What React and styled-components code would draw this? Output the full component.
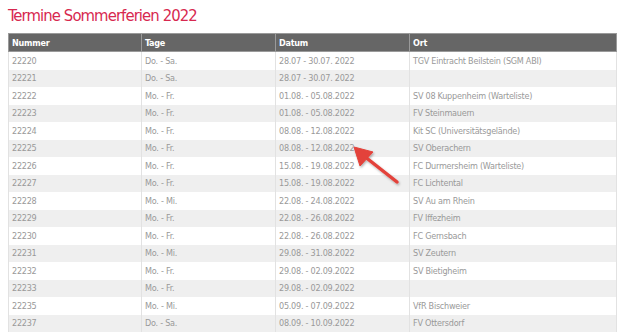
import styled, { createGlobalStyle } from 'styled-components';

const GlobalStyle = createGlobalStyle`
  body {
    margin: 0;
    background: #fff;
    font-family: "DejaVu Sans Condensed", "Liberation Sans Narrow", "Liberation Sans", sans-serif;
  }
`;

const Page = styled.div`
  position: relative;
  padding: 5px 4px 0 8px;
`;

const Title = styled.h2`
  margin: 0 0 7px;
  font-size: 16.5px;
  font-weight: 400;
  letter-spacing: -0.9px;
  line-height: 21px;
  color: #d7284f;
`;

const Table = styled.table`
  width: 608px;
  border-collapse: collapse;
  table-layout: fixed;
  font-size: 9px;
  letter-spacing: -0.25px;
`;

const HeadCell = styled.th`
  height: 17px;
  padding: 0 3px;
  text-align: left;
  font-weight: 700;
  color: #fff;
  background: #666;
  border: 1px solid #9a9a9a;
`;

const Row = styled.tr`
  background: ${p => (p.$striped ? '#efefef' : '#fff')};
`;

const Cell = styled.td`
  height: 17.5px;
  padding: 0 3px;
  color: #999;
  border-left: 1px solid #e2e2e2;
  border-right: 1px solid #e2e2e2;
  white-space: nowrap;
`;

const Arrow = styled.svg`
  position: absolute;
  left: 0;
  top: 0;
  pointer-events: none;
`;

const rows = [
  ['22220', 'Do. - Sa.', '28.07 - 30.07. 2022', 'TGV Eintracht Beilstein (SGM ABI)'],
  ['22221', 'Do. - Sa.', '28.07 - 30.07. 2022', ''],
  ['22222', 'Mo. - Fr.', '01.08. - 05.08.2022', 'SV 08 Kuppenheim (Warteliste)'],
  ['22223', 'Mo. - Fr.', '01.08. - 05.08.2022', 'FV Steinmauern'],
  ['22224', 'Mo. - Fr.', '08.08. - 12.08.2022', 'Kit SC (Universitätsgelände)'],
  ['22225', 'Mo. - Fr.', '08.08. - 12.08.2022', 'SV Oberachern'],
  ['22226', 'Mo. - Fr.', '15.08. - 19.08.2022', 'FC Durmersheim (Warteliste)'],
  ['22227', 'Mo. - Fr.', '15.08. - 19.08.2022', 'FC Lichtental'],
  ['22228', 'Mo. - Mi.', '22.08. - 24.08.2022', 'SV Au am Rhein'],
  ['22229', 'Mo. - Fr.', '22.08. - 26.08.2022', 'FV Iffezheim'],
  ['22230', 'Mo. - Fr.', '22.08. - 26.08.2022', 'FC Gernsbach'],
  ['22231', 'Mo. - Mi.', '29.08. - 31.08.2022', 'SV Zeutern'],
  ['22232', 'Mo. - Fr.', '29.08. - 02.09.2022', 'SV Bietigheim'],
  ['22233', 'Mo. - Fr.', '29.08. - 02.09.2022', ''],
  ['22235', 'Mo. - Mi.', '05.09. - 07.09.2022', 'VfR Bischweier'],
  ['22237', 'Do. - Sa.', '08.09. - 10.09.2022', 'FV Ottersdorf'],
];

const App = () => {
  return (
    <Page>
      <GlobalStyle />
      <Title>Termine Sommerferien 2022</Title>
      <Table>
        <colgroup>
          <col style={{ width: 133 }} />
          <col style={{ width: 134 }} />
          <col style={{ width: 134 }} />
          <col style={{ width: 207 }} />
        </colgroup>
        <thead>
          <tr>
            <HeadCell>Nummer</HeadCell>
            <HeadCell>Tage</HeadCell>
            <HeadCell>Datum</HeadCell>
            <HeadCell>Ort</HeadCell>
          </tr>
        </thead>
        <tbody>
          {rows.map((r, i) => (
            <Row key={r[0]} $striped={i % 2 === 1}>
              {r.map((c, j) => (
                <Cell key={j}>{c}</Cell>
              ))}
            </Row>
          ))}
        </tbody>
      </Table>
      <Arrow width="620" height="336" viewBox="0 0 620 336">
        <defs>
          <filter id="sh" x="-20%" y="-20%" width="140%" height="140%">
            <feDropShadow dx="1" dy="1.5" stdDeviation="1" floodColor="#000" floodOpacity="0.3" />
          </filter>
        </defs>
        <g filter="url(#sh)" fill="#e3423a" stroke="#e3423a">
          <line x1="397" y1="182" x2="364" y2="156" strokeWidth="3.5" strokeLinecap="round" />
          <polygon points="354,147 373,152 360,166" strokeWidth="1" strokeLinejoin="round" />
        </g>
      </Arrow>
    </Page>
  );
};

export default App;
